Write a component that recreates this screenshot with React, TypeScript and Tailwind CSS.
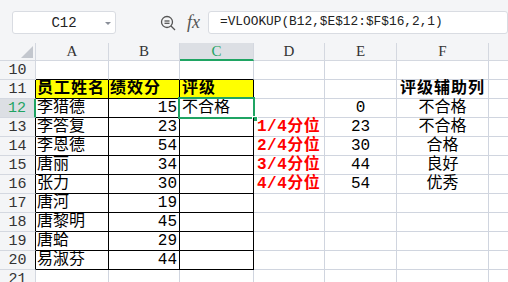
import React from "react";

const FONT = { fontFamily: '"Liberation Mono", "Noto Sans CJK SC", monospace' };
const SERIF = { fontFamily: '"Liberation Serif", serif' };

type Row = {
  n: number;
  a?: string;
  b?: string;
  c?: string;
  d?: string;
  e?: string;
  f?: string;
};

const rows: Row[] = [
  { n: 10 },
  { n: 11, a: "员工姓名", b: "绩效分", c: "评级", f: "评级辅助列" },
  { n: 12, a: "李猎德", b: "15", c: "不合格", e: "0", f: "不合格" },
  { n: 13, a: "李答复", b: "23", d: "1/4分位", e: "23", f: "不合格" },
  { n: 14, a: "李恩德", b: "54", d: "2/4分位", e: "30", f: "合格" },
  { n: 15, a: "唐丽", b: "34", d: "3/4分位", e: "44", f: "良好" },
  { n: 16, a: "张力", b: "30", d: "4/4分位", e: "54", f: "优秀" },
  { n: 17, a: "唐河", b: "19" },
  { n: 18, a: "唐黎明", b: "45" },
  { n: 19, a: "唐蛤", b: "29" },
  { n: 20, a: "易淑芬", b: "44" },
  { n: 21 },
];

const GRID = "grid grid-cols-[36px_73px_71px_74px_71px_72px_92px_40px]";

export default function App() {
  return (
    <div className="w-[508px] h-[282px] overflow-hidden bg-white text-black" style={FONT}>
      {/* toolbar */}
      <div className="h-[43px] bg-[#f4f5f7] flex items-start pt-[11px] overflow-hidden">
        <div className="ml-[12px] w-[147px] h-[23px] bg-white border border-[#d9dce2] rounded-[3px] relative flex items-center justify-center">
          <span className="text-[14px] text-[#222] leading-none">C12</span>
          <div className="absolute right-[4px] top-[10px] w-0 h-0 border-l-[3px] border-r-[3px] border-t-[3px] border-l-transparent border-r-transparent border-t-[#8a8f99]" />
        </div>
        <div className="ml-[44px] mt-[4px] w-[16px] h-[16px]">
          <svg width="16" height="16" viewBox="0 0 16 16" fill="none" stroke="#555" strokeWidth="1.3">
            <circle cx="7" cy="7" r="5.5" />
            <line x1="4.5" y1="6" x2="9.5" y2="6" />
            <line x1="4.5" y1="8.3" x2="9.5" y2="8.3" />
            <line x1="11" y1="11" x2="15" y2="15" />
          </svg>
        </div>
        <div className="ml-[11px] mt-[1px] h-[20px] flex items-center">
          <span className="italic text-[18px] leading-none text-[#555]" style={SERIF}>
            fx
          </span>
        </div>
        <div className="ml-[8px] w-[300px] shrink-0 h-[23px] bg-white border border-[#d9dce2] rounded-[3px] flex items-center pl-[11px]">
          <span className="text-[12.8px] leading-none text-[#222] whitespace-nowrap">=VLOOKUP(B12,$E$12:$F$16,2,1)</span>
        </div>
      </div>

      {/* column header */}
      <div className={`${GRID} h-[18px] bg-[#f4f5f7] text-[15px] text-[#333]`}>
        <div className="border-r border-b border-[#d4d8e0] relative">
          <svg className="absolute right-[2px] bottom-[2px]" width="12" height="12" viewBox="0 0 12 12">
            <polygon points="12,0 12,12 0,12" fill="#c3c7ce" />
          </svg>
        </div>
        {["A", "B", "C", "D", "E", "F", ""].map((l) =>
          l === "C" ? (
            <div key={l} style={SERIF} className="bg-[#dcdfe4] border-r border-[#d4d8e0] border-b-2 border-b-[#1fa463] flex items-center justify-center text-[#1fa463] leading-none">
              {l}
            </div>
          ) : (
            <div key={l || "g"} style={SERIF} className="border-r border-b border-[#d4d8e0] flex items-center justify-center leading-none">
              {l}
            </div>
          )
        )}
      </div>

      {/* rows */}
      {rows.map((r) => {
        const boxed = r.n >= 11 && r.n <= 20;
        const topBoxRow = r.n === 10;
        const sel = r.n === 12;
        const head = r.n === 11;
        const boxCell = (extra: string) =>
          `h-[19px] border-r border-b ${boxed ? "border-black" : topBoxRow ? "border-r-[#d0d5df] border-b-black" : "border-[#d0d5df]"} ${extra}`;
        const gray = "h-[19px] border-r border-b border-[#d0d5df]";
        return (
          <div key={r.n} className={`${GRID} h-[19px] text-[16px]`}>
            <div
              className={`h-[19px] border-b border-[#d4d8e0] flex items-center justify-center text-[15px] leading-none ${
                sel
                  ? "bg-[#dcdfe4] text-[#1fa463] border-r-2 border-r-[#1fa463]"
                  : boxed
                  ? "bg-[#f4f5f7] text-[#333] border-r border-r-black"
                  : "bg-[#f4f5f7] text-[#333] border-r border-r-[#d4d8e0]"
              }`}
            >
              {r.n}
            </div>
            <div className={boxCell(`${head ? "bg-[#ffff00] font-bold tracking-[1px]" : ""} flex items-end pl-[1px] leading-[18px] whitespace-nowrap overflow-visible`)}>
              {r.a}
            </div>
            <div className={boxCell(`${head ? "bg-[#ffff00] font-bold tracking-[1px] justify-start pl-[1px]" : "justify-end pr-[2px]"} flex items-end leading-[18px] whitespace-nowrap`)}>
              {r.b}
            </div>
            <div className={boxCell(`${head ? "bg-[#ffff00] font-bold tracking-[1px]" : ""} relative flex items-end pl-[2px] leading-[18px] whitespace-nowrap`)}>
              {r.c}
              {sel && (
                <>
                  <div className="absolute left-[-2px] top-[-2px] right-[-2px] bottom-[-2px] border-2 border-[#1fa463] pointer-events-none" />
                  <div className="absolute right-[-5px] bottom-[-5px] w-[6px] h-[6px] bg-[#1fa463] border border-white" />
                </>
              )}
            </div>
            <div className={`${gray} flex items-end pl-[3px] leading-[18px] whitespace-nowrap font-bold text-[#ff0000] tracking-[0.5px]`}>
              {r.d}
            </div>
            <div className={`${gray} flex items-end justify-center leading-[18px] whitespace-nowrap`}>{r.e}</div>
            <div className={`${gray} flex items-end justify-center leading-[18px] whitespace-nowrap ${head ? "font-bold tracking-[1px]" : ""}`}>
              {r.f}
            </div>
            <div className={gray} />
          </div>
        );
      })}
    </div>
  );
}
